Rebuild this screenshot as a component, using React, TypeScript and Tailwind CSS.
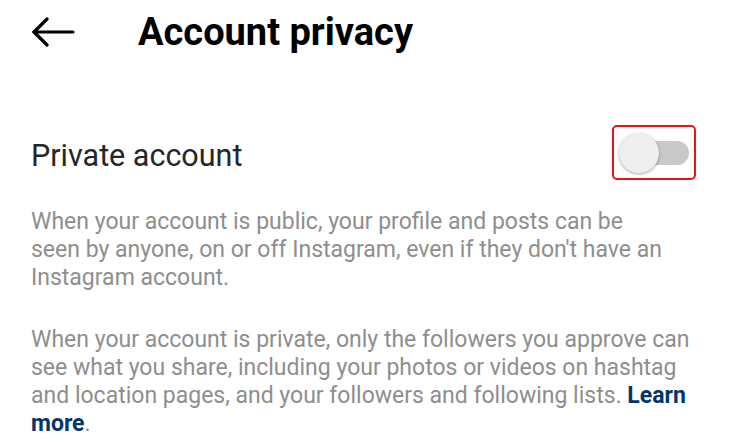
import React from "react";

const BackArrow = () => (
  <svg width="44" height="30" viewBox="0 0 44 30" fill="none" stroke="#000" strokeWidth="3.2" strokeLinecap="round" strokeLinejoin="round">
    <path d="M42 15H3" />
    <path d="M16 2L3 15l13 13" />
  </svg>
);

const Toggle = () => (
  <div className="flex h-[55px] w-[84px] items-center rounded-[5px] border-2 border-[#e8141c] px-[5px]">
    <div className="relative h-[40px] w-[70px]">
      <div className="absolute left-[8px] top-[8px] h-[24px] w-[62px] rounded-full bg-[#c9c9c9]" />
      <div className="absolute left-0 top-0 h-[40px] w-[40px] rounded-full bg-[#eeeeee] shadow-[0_1px_3px_rgba(0,0,0,0.35)]" />
    </div>
  </div>
);

export default function App() {
  return (
    <div className="h-[442px] w-[729px] overflow-hidden bg-white font-['Roboto',sans-serif]">
      {/* Header */}
      <div className="flex items-center pt-[13px]">
        <div className="ml-[31px] flex w-[107px] items-center">
          <BackArrow />
        </div>
        <h1 className="text-[38px] font-bold leading-[38px] text-black">Account privacy</h1>
      </div>

      {/* Private account row */}
      <div className="mt-[74px] flex items-center justify-between pl-[31px] pr-[33px]">
        <span className="pt-[5px] text-[30.5px] leading-[29px] text-[#262626]">Private account</span>
        <Toggle />
      </div>

      {/* Descriptions */}
      <div className="mt-[28px] pl-[31px] text-[23px] leading-[28px] text-[#8e8e8e]">
        <p>
          <span className="block whitespace-nowrap">When your account is public, your profile and posts can be</span>
          <span className="block whitespace-nowrap">seen by anyone, on or off Instagram, even if they don't have an</span>
          <span className="block whitespace-nowrap">Instagram account.</span>
        </p>
        <p className="mt-[34px]">
          <span className="block whitespace-nowrap">When your account is private, only the followers you approve can</span>
          <span className="block whitespace-nowrap">see what you share, including your photos or videos on hashtag</span>
          <span className="block whitespace-nowrap">
            and location pages, and your followers and following lists.{" "}
            <a className="font-bold text-[#00376b]">Learn</a>
          </span>
          <span className="block whitespace-nowrap">
            <a className="font-bold text-[#00376b]">more</a>.
          </span>
        </p>
      </div>
    </div>
  );
}
